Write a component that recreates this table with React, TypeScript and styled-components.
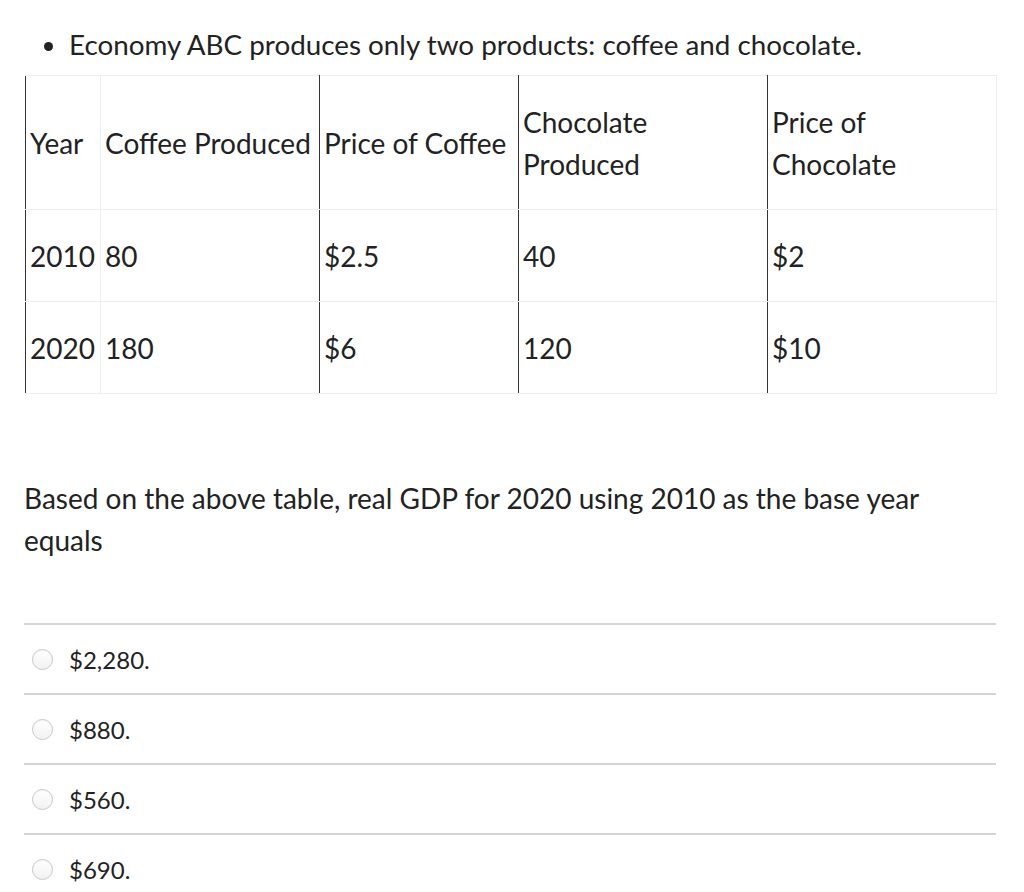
import React from 'react';
import styled, { createGlobalStyle } from 'styled-components';

const GlobalStyle = createGlobalStyle`
  body {
    margin: 0;
    background: #fff;
    color: #222;
    font-family: Lato, "Open Sans", sans-serif;
  }
`;

const Page = styled.div`
  padding: 0 28px 0 24px;
`;

const Intro = styled.ul`
  margin: 0;
  padding: 23px 0 0 45px;
  font-size: 27.8px;
  line-height: 42px;
  height: 52px;

  li::marker {
    font-size: 28px;
  }
`;

const Table = styled.table`
  border-collapse: collapse;
  table-layout: fixed;
  width: 971px;
  font-size: 28px;
  line-height: 42px;
  margin-left: 1px;
`;

const Row = styled.tr<{ $h: number }>`
  height: ${(p) => p.$h}px;
`;

const Cell = styled.td<{ $darkLeft?: boolean; $darkRight?: boolean; $w: number }>`
  box-sizing: border-box;
  width: ${(p) => p.$w}px;
  padding: 0 4px;
  vertical-align: middle;
  border: 1px solid #eeeeee;
  ${(p) => (p.$darkLeft ? 'border-left-color: #333;' : '')}
  ${(p) => (p.$darkRight ? 'border-right-color: #333;' : '')}
`;

const Question = styled.p`
  margin: 83px 0 0;
  font-size: 28px;
  line-height: 42px;
`;

const Answers = styled.div`
  margin-top: 62px;
  width: 972px;
`;

const Answer = styled.label`
  display: flex;
  align-items: center;
  gap: 16px;
  height: 68px;
  padding-left: 8px;
  border-top: 2px solid #d4d4d4;
  font-size: 24px;
`;

const Radio = styled.span`
  width: 19px;
  height: 19px;
  border-radius: 50%;
  border: 1px solid #c8c8c8;
  background: linear-gradient(#ffffff, #f2f2f2);
  box-shadow: inset 0 1px 1px rgba(0, 0, 0, 0.04);
  flex-shrink: 0;
`;

const widths = [75, 219, 199, 249, 229];
const darkCols = [true, false, true, true, true];

const header = ['Year', 'Coffee Produced', 'Price of Coffee', 'Chocolate Produced', 'Price of Chocolate'];
const rows = [
  ['2010', '80', '$2.5', '40', '$2'],
  ['2020', '180', '$6', '120', '$10'],
];

const answers = ['$2,280.', '$880.', '$560.', '$690.'];

const renderCells = (cells: string[]) =>
  cells.map((c, j) => (
    <Cell key={j} $w={widths[j]} $darkLeft={darkCols[j]} $darkRight={darkCols[j + 1]}>
      {c}
    </Cell>
  ));

const App = () => {
  return (
    <>
      <GlobalStyle />
      <Page>
        <Intro>
          <li>Economy ABC produces only two products: coffee and chocolate.</li>
        </Intro>
        <Table>
          <tbody>
            <Row $h={134}>{renderCells(header)}</Row>
            {rows.map((r, i) => (
              <Row key={i} $h={92}>
                {renderCells(r)}
              </Row>
            ))}
          </tbody>
        </Table>
        <Question>Based on the above table, real GDP for 2020 using 2010 as the base year equals</Question>
        <Answers>
          {answers.map((a, i) => (
            <Answer key={i}>
              <Radio />
              {a}
            </Answer>
          ))}
        </Answers>
      </Page>
    </>
  );
};

export default App;
